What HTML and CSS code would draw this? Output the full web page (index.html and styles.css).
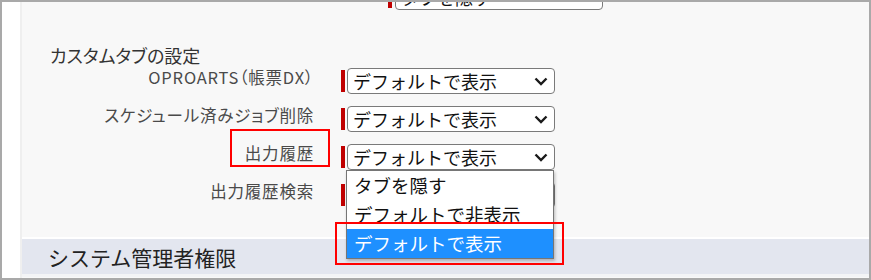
FILE: index.html
```html
<!DOCTYPE html>
<html lang="ja">
<head>
    <meta charset="UTF-8">
    <title>カスタムタブの設定</title>
    <link rel="stylesheet" href="styles.css">
</head>
<body>
    <div class="frame">
        <div class="gutter"></div>
        <div class="main">
            <div class="row row-top">
                <span class="req"></span>
                <div class="select">
                    <span>タブを隠す</span>
                    <svg class="chevron" width="14" height="9" viewBox="0 0 14 9"><polyline points="1.5,1.5 7,7 12.5,1.5"/></svg>
                </div>
            </div>

            <h3 class="title">カスタムタブの設定</h3>

            <div class="rows">
                <div class="row">
                    <div class="label">OPROARTS（帳票DX）</div>
                    <span class="req"></span>
                    <div class="select">
                        <span>デフォルトで表示</span>
                        <svg class="chevron" width="14" height="9" viewBox="0 0 14 9"><polyline points="1.5,1.5 7,7 12.5,1.5"/></svg>
                    </div>
                </div>
                <div class="row">
                    <div class="label">スケジュール済みジョブ削除</div>
                    <span class="req"></span>
                    <div class="select">
                        <span>デフォルトで表示</span>
                        <svg class="chevron" width="14" height="9" viewBox="0 0 14 9"><polyline points="1.5,1.5 7,7 12.5,1.5"/></svg>
                    </div>
                </div>
                <div class="row">
                    <div class="label"><span class="marked">出力履歴</span></div>
                    <span class="req"></span>
                    <div class="select open">
                        <span>デフォルトで表示</span>
                        <svg class="chevron" width="14" height="9" viewBox="0 0 14 9"><polyline points="1.5,1.5 7,7 12.5,1.5"/></svg>
                        <!-- opened option list -->
                        <ul class="dropdown">
                            <li>タブを隠す</li>
                            <li>デフォルトで非表示</li>
                            <li class="selected">デフォルトで表示</li>
                        </ul>
                    </div>
                </div>
                <div class="row">
                    <div class="label">出力履歴検索</div>
                    <span class="req"></span>
                    <div class="select">
                        <span>デフォルトで表示</span>
                        <svg class="chevron" width="14" height="9" viewBox="0 0 14 9"><polyline points="1.5,1.5 7,7 12.5,1.5"/></svg>
                    </div>
                </div>
            </div>

            <div class="band">
                <h3>システム管理者権限</h3>
            </div>
        </div>
    </div>
</body>
</html>
```

FILE: styles.css
```css
body, html {
    margin: 0;
    height: 100%;
    font-family: 'Noto Sans CJK JP', sans-serif;
    background-color: white;
}

.frame {
    width: 871px;
    height: 280px;
    box-sizing: border-box;
    border: 2px solid #a9a9a9;
    display: flex;
    background-color: white;
}

.gutter {
    width: 18px;
    border-right: 2px solid #efefef;
    background-color: white;
}

.main {
    flex: 1;
    display: flex;
    flex-direction: column;
    background-color: #f8f8f8;
    overflow: hidden;
}

.row {
    display: flex;
    align-items: flex-start;
    height: 26px;
}

.row-top {
    margin-top: -18px;
    padding-left: 366px;
}

.row-top .req {
    margin-right: 3px;
}

.title {
    margin: 34px 0 2px 28px;
    font-size: 18px;
    line-height: 22px;
    font-weight: normal;
    color: #333;
    font-feature-settings: "palt";
}

.rows {
    display: flex;
    flex-direction: column;
    gap: 12px;
}

.label {
    width: 292px;
    text-align: right;
    font-size: 16.5px;
    line-height: 18px;
    color: #4a4a4a;
    letter-spacing: 0.8px;
    font-feature-settings: "palt";
    margin-right: 27px;
}

.marked {
    position: relative;
}

.marked::before {
    content: "";
    position: absolute;
    left: -15px;
    right: -16px;
    top: -12px;
    bottom: -2px;
    border: 2px solid #ff0000;
}

.req {
    width: 4px;
    height: 22px;
    margin-top: 2px;
    margin-right: 2px;
    background-color: #c00000;
}

.select {
    position: relative;
    width: 208px;
    height: 26px;
    box-sizing: border-box;
    border: 1px solid #7a7a7a;
    border-radius: 4px;
    background-color: white;
    display: flex;
    align-items: center;
    justify-content: space-between;
    padding: 0 6px 0 5px;
    font-size: 18px;
    line-height: 24px;
    color: #111;
}

.chevron {
    fill: none;
    stroke: #1a1a1a;
    stroke-width: 2.4;
}

.dropdown {
    position: absolute;
    top: 25px;
    left: -2px;
    width: 208px;
    box-sizing: border-box;
    margin: 0;
    padding: 0;
    list-style: none;
    background-color: white;
    border: 1px solid #767676;
    box-shadow: 1px 2px 3px rgba(0, 0, 0, 0.25);
    z-index: 2;
}

.dropdown li {
    height: 29px;
    line-height: 29px;
    padding-left: 7px;
    font-size: 18.5px;
    color: #111;
}

.dropdown li.selected {
    position: relative;
    background-color: #1e90ff;
    color: white;
}

.dropdown li.selected::after {
    content: "";
    position: absolute;
    left: -12px;
    right: -11px;
    top: -7px;
    bottom: -7px;
    border: 2px solid #ff0000;
}

.band {
    margin-top: 29px;
    border-top: 2px solid white;
    border-bottom: 3px solid #f3f4f6;
    background-color: #e3e6ef;
    height: 35px;
    display: flex;
    align-items: center;
    padding-left: 26px;
}

.band h3 {
    margin: 0;
    font-size: 21px;
    font-weight: normal;
    line-height: 26px;
    color: #222;
}
```
